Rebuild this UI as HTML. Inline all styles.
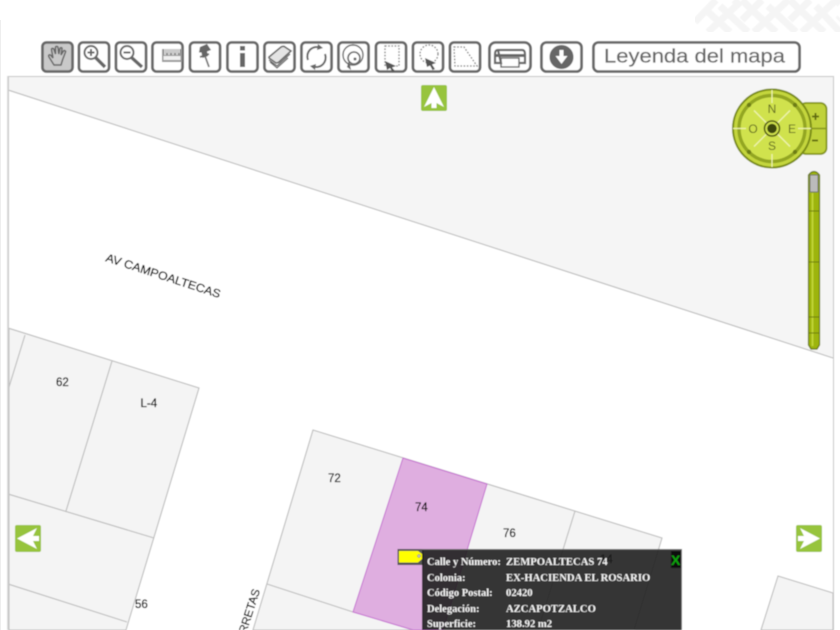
<!DOCTYPE html>
<html><head><meta charset="utf-8">
<style>
html,body{margin:0;padding:0;width:840px;height:630px;overflow:hidden;background:#fff}
svg{display:block;position:absolute;left:0;top:0;width:840px;height:630px;overflow:hidden}
.b{fill:#fff;stroke:#666;stroke-width:2.6}
.i{fill:none;stroke:#666;stroke-width:2}
.d{fill:none;stroke:#777;stroke-width:1.3;stroke-dasharray:1.6 1.6}
.l{font-family:"Liberation Sans",sans-serif;font-size:11.500px;fill:#000;stroke:#000;stroke-width:0.25}
.t{font-family:"Liberation Serif",serif;font-size:10.500px;font-weight:bold;fill:#f4f4f4}
.v{font-size:10.650px}
.lot{stroke:#bdbdbd;stroke-width:1.1;fill:#f4f4f4}
.ln{stroke:#bdbdbd;stroke-width:1.1;fill:none}
</style></head><body>
<svg width="840" height="630" viewBox="0 0 840 630" xmlns="http://www.w3.org/2000/svg">
<defs>
<filter id="s" x="0" y="0" width="840" height="630" filterUnits="userSpaceOnUse"><feGaussianBlur stdDeviation="0.4"/></filter>
<clipPath id="p"><rect x="695" y="0" width="145" height="32"/></clipPath>
<clipPath id="c"><rect x="0" y="0" width="840" height="630"/></clipPath>
</defs>
<rect width="840" height="630" fill="#fff"/>
<rect x="0" y="20" width="1" height="610" fill="#eee"/>
<!-- top-right pattern -->
<g clip-path="url(#p)" stroke="#f5f5f5" stroke-width="7" fill="none" filter="url(#s)">
<path d="M695 22L716 0M708 32L738 4L734 0M730 32L706 10M748 32L720 6M742 20L762 0M754 32L786 2L784 0M776 32L752 10M796 32L768 6M790 20L810 0M802 32L834 2L832 0M824 32L800 10M840 32L816 6M838 20L840 18M742 0L750 8M790 0L798 8M836 0L840 4"/>
</g>
<!-- map -->
<g filter="url(#s)">
<rect x="8" y="76" width="826" height="554" fill="#fff"/>
<path d="M9 77H833V358L9 90.300Z" fill="#f5f5f5"/>
<path d="M9 90.300L833 358" class="ln"/>
<path d="M9 328.300L199 388L126 630H9Z" class="lot"/>
<path class="ln" d="M25 335L9 387M112 361L66 511M9 494.300L154 538M9 584.300L127 622"/>
<path d="M313 430L662 538L634 630H253Z" class="lot"/>
<path class="ln" d="M267 584L353 612"/>
<path d="M403 458L487 484L443 630H413L353 612Z" fill="#dfaee0" stroke="#c56fd0" stroke-width="1"/>
<path class="ln" d="M575 511L538 630"/>
<path d="M778 576L833 593V630H761Z" class="lot"/>
<text class="l" x="56" y="386">62</text>
<text class="l" x="140.500" y="407">L-4</text>
<text class="l" x="135" y="608">56</text>
<text class="l" x="328" y="482">72</text>
<text class="l" x="415" y="511">74</text>
<text class="l" x="503" y="537">76</text>
<text class="l" x="600" y="563">14</text>
<text class="l" transform="translate(105,261) rotate(18)" textLength="120" lengthAdjust="spacingAndGlyphs">AV CAMPOALTECAS</text>
<g clip-path="url(#c)"><text class="l" transform="translate(246,634) rotate(-72)">RRETAS</text></g>
<path d="M8.500 630V76.500H833.500V630" fill="none" stroke="#c8c8c8"/>
<rect x="7" y="76" width="1" height="554" fill="#ddd"/>

<!-- toolbar -->
<rect class="b" x="42.500" y="42.500" width="30" height="29" rx="4" style="fill:#c9c9c9"/>
<rect class="b" x="79" y="42.500" width="30" height="29" rx="4"/>
<rect class="b" x="116" y="42.500" width="30" height="29" rx="4"/>
<rect class="b" x="152.500" y="42.500" width="30" height="29" rx="4"/>
<rect class="b" x="190" y="42.500" width="30" height="29" rx="4"/>
<rect class="b" x="227.500" y="42.500" width="30" height="29" rx="4"/>
<rect class="b" x="264.500" y="42.500" width="30" height="29" rx="4"/>
<rect class="b" x="301.500" y="42.500" width="30" height="29" rx="4"/>
<rect class="b" x="338.500" y="42.500" width="30" height="29" rx="4"/>
<rect class="b" x="376" y="42.500" width="30" height="29" rx="4"/>
<rect class="b" x="413" y="42.500" width="30" height="29" rx="4"/>
<rect class="b" x="450" y="42.500" width="30" height="29" rx="4"/>
<rect class="b" x="489.500" y="42.500" width="41" height="29" rx="6"/>
<rect class="b" x="541.500" y="42.500" width="40" height="29" rx="5"/>
<rect class="b" x="593.500" y="42.500" width="206" height="29" rx="5"/>
<!-- hand -->
<path class="i" style="stroke-width:1.500" d="M54 65L49 57C48 55 49.500 54 51 55.500L53 58L51.500 49.500C51.500 48 53.500 48 54 49.500L55.500 54L55.500 47.500C55.500 46 57.800 46 58 47.500L58.800 54L60 48.500C60.300 47 62.300 47.500 62 49L61 55L63.500 51C64.500 50 66 51 65.500 52L62.500 60L61 65Z"/>
<!-- zoom in -->
<circle class="i" cx="91" cy="52.500" r="6.500"/><path class="i" d="M87.500 52.500H94.500M91 49V56"/><path d="M95.500 57.500L105 67" fill="none" stroke="#666" stroke-width="3.400"/>
<!-- zoom out -->
<circle class="i" cx="127" cy="52.500" r="6.500"/><path class="i" d="M123.500 52.500H130.500"/><path d="M131.500 57.500L142 67" fill="none" stroke="#666" stroke-width="3.400"/>
<!-- ruler -->
<rect x="162" y="49" width="20" height="13" fill="#9a9a9a"/><rect x="163.500" y="56" width="17" height="4" fill="#f0f0f0"/>
<path d="M165 49V55M167 49V53M169 49V55M171 49V53M173 49V55M175 49V53M177 49V55M179 49V53" stroke="#f0f0f0" stroke-width="1"/>
<!-- pin -->
<path d="M200 47L207 44L211 50L207 51.500L208 56L202.500 58L201.500 52.500L199 52.500Z" fill="#666"/><path d="M205 56L209 67" stroke="#777" stroke-width="1.800" fill="none"/><path d="M200 57L209 54" stroke="#666" stroke-width="1.800"/>
<!-- info -->
<rect x="240" y="46" width="5" height="4.500" fill="#666"/><rect x="240" y="53" width="5" height="14" fill="#666"/>
<!-- layers -->
<path d="M269 57L281 47C283 46 284 46 285 47L291 51L279 62C278 63 277 63 276 63L269 58Z" fill="#e4e4e4" stroke="#666" stroke-width="1.600"/>
<path class="i" style="stroke-width:1.200" d="M269 60L277 66L290 54M270 62L277 68L288 58"/>
<!-- refresh -->
<path class="i" d="M308 60A9.500 9.500 0 0 1 320 47.500M325 54A9.500 9.500 0 0 1 313 66.500"/>
<path d="M318 44L323 48L317 50ZM315 70L310 66L316 64Z" fill="#666"/>
<!-- circle select -->
<circle class="i" style="stroke-width:1.400" cx="353" cy="55" r="10"/><circle class="i" style="stroke-width:1.600" cx="354" cy="58" r="6"/><circle cx="355" cy="59" r="1.500" fill="#666"/>
<path d="M349 60L351 70L347 67Z" fill="#666"/>
<!-- rect select -->
<rect class="d" x="385" y="46" width="14" height="20"/>
<path d="M385 61L396 66L392 67.500L395 71L392.500 72L390 68L387 70Z" fill="#555"/>
<!-- circle dashed -->
<circle class="d" cx="429" cy="54" r="9"/>
<path d="M425 58L436 63L432 64.500L435 69L432.500 70L430 65.500L427 67Z" fill="#555"/>
<!-- polygon dashed -->
<path class="d" d="M454 47H464L477 66H455Z"/>
<!-- printer -->
<path class="i" style="stroke-width:2.200" d="M498 50H522C525 50 525 53 525 55V63H519M501 63H495V55C495 53 495 50 498 50Z"/>
<rect x="495" y="54" width="30" height="3" fill="#666"/>
<rect class="i" style="stroke-width:1.400" x="501" y="58" width="18" height="9"/>
<!-- download -->
<circle cx="561.500" cy="57" r="12" fill="#666"/>
<path d="M559.500 50H563.500V56H567.500L561.500 64L555.500 56H559.500Z" fill="#fff"/>
<text x="604" y="62.500" font-family="'Liberation Sans',sans-serif" font-size="19.500" fill="#666" stroke="#666" stroke-width="0.200" textLength="181" lengthAdjust="spacingAndGlyphs">Leyenda del mapa</text>

<!-- nav arrows -->
<rect x="421" y="85" width="26" height="26" rx="2" fill="#97c43c"/>
<path d="M434 87L444 107L436.500 103V108H431.500V103L424 107Z" fill="#fff"/>
<rect x="15" y="525" width="26" height="27" rx="2" fill="#97c43c"/>
<path d="M17 538.500L37 528L33 536H39V541H33L37 549Z" fill="#fff"/>
<rect x="796" y="525" width="26" height="27" rx="2" fill="#97c43c"/>
<path d="M820 538.500L800 528L804 536H798V541H804L800 549Z" fill="#fff"/>

<!-- zoom +/- -->
<rect x="800" y="103" width="26.500" height="51" rx="6" fill="#c0d23a" stroke="#85961a" stroke-width="1.800"/>
<path d="M803 128.500H826" stroke="#85961a" stroke-width="1.500"/>
<path d="M812 116.500H819M815.500 113V120" stroke="#5f6a10" stroke-width="1.800"/>
<path d="M812 140.500H818" stroke="#5f6a10" stroke-width="1.800"/>
<!-- compass -->
<circle cx="772" cy="128.500" r="39" fill="#c4d63c" stroke="#7a8c18" stroke-width="2"/>
<circle cx="772" cy="128.500" r="33" fill="#d0e24e" stroke="#93a624" stroke-width="3.400"/>
<path d="M772 90V103M772 154V167M733 128.500H746M798 128.500H811M754 110.500L790 146.500M790 110.500L754 146.500" stroke="#eef3ae" stroke-width="1.300"/>
<circle cx="749" cy="105" r="2.200" fill="#6d7d15"/><circle cx="795" cy="105" r="2.200" fill="#6d7d15"/><circle cx="749" cy="152" r="2.200" fill="#6d7d15"/><circle cx="795" cy="152" r="2.200" fill="#6d7d15"/>
<circle cx="772" cy="128.500" r="7.500" fill="#d0e24e" stroke="#4d560e" stroke-width="1.500"/>
<circle cx="772" cy="128.500" r="4.800" fill="#3e460a"/>
<g font-family="'Liberation Sans',sans-serif" font-size="12" fill="#5e6820" text-anchor="middle">
<text x="772" y="113">N</text><text x="753" y="133">O</text><text x="792" y="133">E</text><text x="772" y="150">S</text></g>
<!-- slider -->
<path d="M808.500 175Q814 168 819.500 175V345L817 349H811L808.500 345Z" fill="#9db40f" stroke="#66770a" stroke-width="1.200"/>
<rect x="810" y="175" width="8" height="17" fill="#bbb" stroke="#666" stroke-width="0.800"/>
<path d="M812.500 193V346" stroke="#c2d636" stroke-width="1.800"/>
<path d="M809 211H819M809 262H819M809 317H819M809 333H819" stroke="#6c7d0c" stroke-width="1"/>

<!-- yellow tag -->
<rect x="397.500" y="549" width="26" height="16" fill="#555"/>
<path d="M399 551H418L422 554V559L418 562.500H399Z" fill="#ff0"/>
<circle cx="419" cy="556" r="1.500" fill="#ccc" stroke="#444" stroke-width="0.500"/>
<!-- balloon -->
<rect x="422" y="549" width="260" height="81" fill="#1f1f1f" fill-opacity="0.9"/>
<rect x="422" y="549" width="260" height="1" fill="#666"/>
<rect x="681" y="549" width="1" height="81" fill="#666"/>
<rect x="671" y="551" width="10" height="17" fill="#111"/>
<text x="671" y="565" font-family="'Liberation Sans',sans-serif" font-size="14" font-weight="bold" fill="#0fa30f">X</text>
<text class="t" x="427" y="565">Calle y Número:</text><text class="t v" x="506" y="565">ZEMPOALTECAS 74</text>
<text class="t" x="427" y="581">Colonia:</text><text class="t v" x="506" y="581">EX-HACIENDA EL ROSARIO</text>
<text class="t" x="427" y="596">Código Postal:</text><text class="t v" x="506" y="596">02420</text>
<text class="t" x="427" y="612">Delegación:</text><text class="t v" x="506" y="612">AZCAPOTZALCO</text>
<text class="t" x="427" y="627">Superficie:</text><text class="t v" x="506" y="627">138.92 m2</text>
</g>
</svg>
</body></html>
